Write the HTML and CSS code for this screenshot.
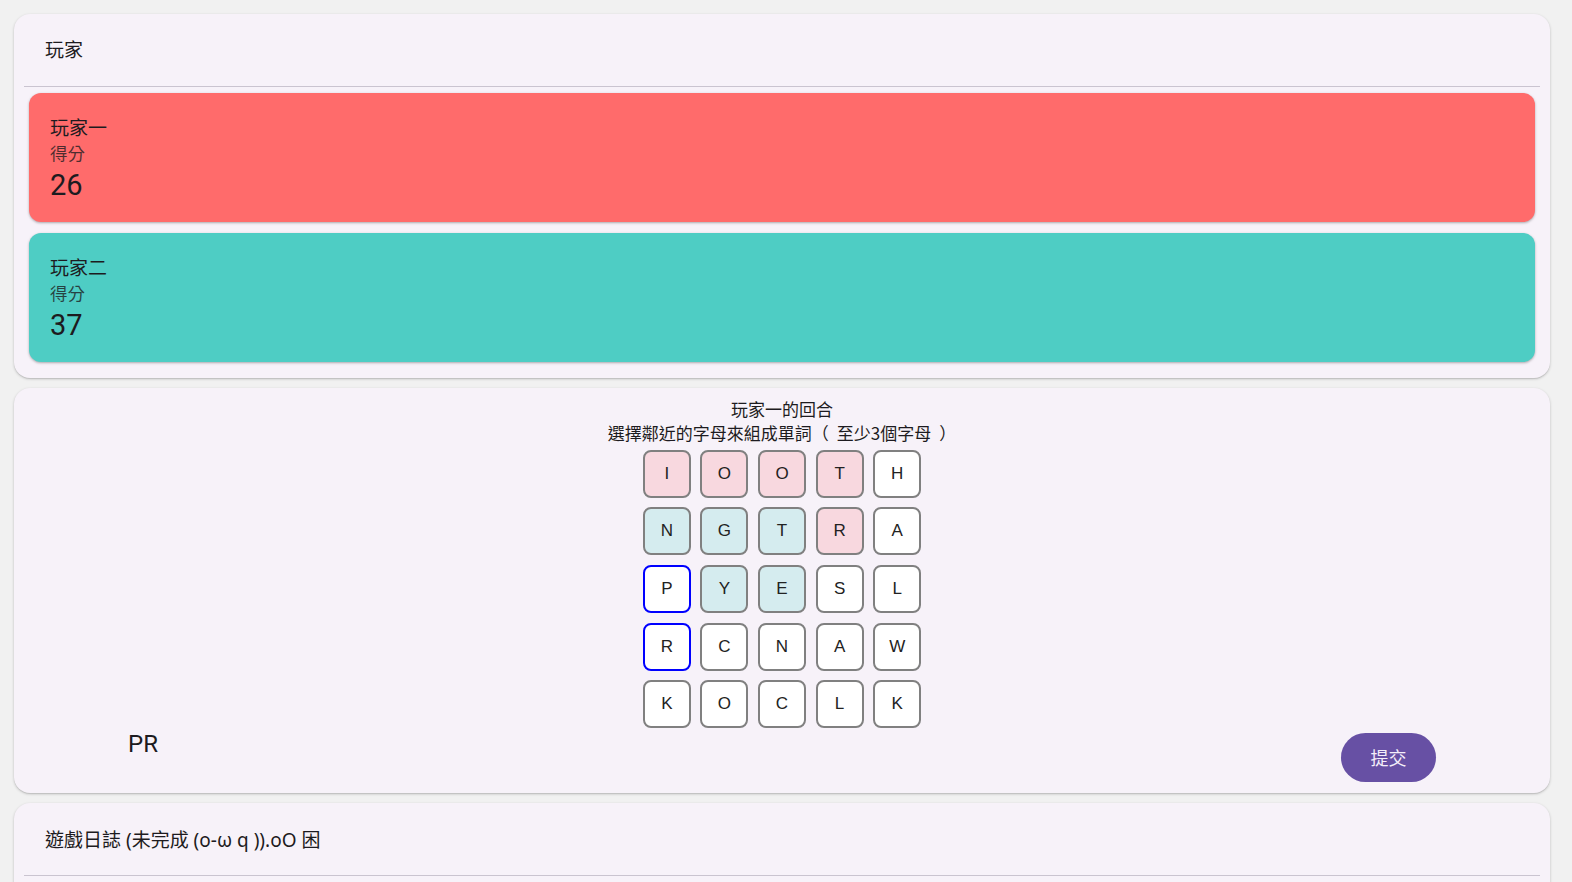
FILE: index.html
```html
<!DOCTYPE html>
<html lang="zh-Hant">
<head>
<meta charset="utf-8">
<title>Word Game</title>
<link rel="stylesheet" href="styles.css">
</head>
<body>
<main class="page">
  <section class="card card-players">
    <div class="card-header">玩家</div>
    <div class="divider"></div>
    <div class="players">
      <div class="player player-red">
        <div class="player-name">玩家一</div>
        <div class="player-label">得分</div>
        <div class="player-score">26</div>
      </div>
      <div class="player player-teal">
        <div class="player-name">玩家二</div>
        <div class="player-label">得分</div>
        <div class="player-score">37</div>
      </div>
    </div>
  </section>

  <section class="card card-game">
    <div class="turn">玩家一的回合</div>
    <div class="hint">選擇鄰近的字母來組成單詞<span class="paren-open">（</span>至少3個字母<span class="paren-close">）</span></div>
    <div class="board">
      <div class="tile t-red">I</div>
      <div class="tile t-red">O</div>
      <div class="tile t-red">O</div>
      <div class="tile t-red">T</div>
      <div class="tile">H</div>
      <div class="tile t-teal">N</div>
      <div class="tile t-teal">G</div>
      <div class="tile t-teal">T</div>
      <div class="tile t-red">R</div>
      <div class="tile">A</div>
      <div class="tile t-sel">P</div>
      <div class="tile t-teal">Y</div>
      <div class="tile t-teal">E</div>
      <div class="tile">S</div>
      <div class="tile">L</div>
      <div class="tile t-sel">R</div>
      <div class="tile">C</div>
      <div class="tile">N</div>
      <div class="tile">A</div>
      <div class="tile">W</div>
      <div class="tile">K</div>
      <div class="tile">O</div>
      <div class="tile">C</div>
      <div class="tile">L</div>
      <div class="tile">K</div>
    </div>
    <div class="word-row">
      <div class="current-word">PR</div>
      <button class="submit" type="button">提交</button>
    </div>
  </section>

  <section class="card card-log">
    <div class="card-header">遊戲日誌 (未完成 (o-ω q )).oO 困</div>
    <div class="divider"></div>
    <div class="log"></div>
  </section>
</main>
</body>
</html>
```

FILE: styles.css
```css
html, body {
  margin: 0;
  padding: 0;
  background: #f1f1f1;
  overflow: hidden;
}

body {
  font-family: Roboto, "Liberation Sans", "Noto Sans CJK TC", sans-serif;
  color: #1d1b20;
}

.page {
  display: flex;
  flex-direction: column;
  gap: 10px;
  padding: 14px 22px 0 14px;
}

.card {
  background: #f7f2f9;
  border-radius: 16px;
  box-shadow: 0 1px 3px rgba(0, 0, 0, 0.2), 0 1px 1px rgba(0, 0, 0, 0.08);
  padding: 0 10px;
}

.card-header {
  padding: 24px 21px;
  font-size: 19px;
  line-height: 24px;
  font-family: "Noto Sans", "Noto Sans CJK TC", sans-serif;
  color: #1d1b20;
}

.card-log .card-header {
  padding-top: 25px;
  padding-bottom: 23px;
}

.divider {
  height: 1px;
  background: #cac4d0;
}

.players {
  display: flex;
  flex-direction: column;
  gap: 11px;
  padding: 6px 5px 16px;
}

.player {
  border-radius: 12px;
  padding: 20px 21px 18px;
  box-shadow: 0 1px 3px rgba(0, 0, 0, 0.22), 0 1px 2px rgba(0, 0, 0, 0.1);
}

.player-red { background: #ff6b6b; }
.player-teal { background: #4ecdc4; }

.player-name {
  font-size: 19px;
  line-height: 27px;
  font-family: "Noto Sans CJK TC", sans-serif;
  color: #1d1b20;
}

.player-label {
  font-size: 17.5px;
  line-height: 26px;
  font-family: "Noto Sans CJK TC", sans-serif;
  color: rgba(29, 27, 32, 0.78);
}

.player-score {
  font-size: 29px;
  line-height: 38px;
  font-family: Roboto, "Liberation Sans", sans-serif;
  color: #1d1b20;
}

.card-game {
  padding: 9px 10px 11px;
}

.turn, .hint {
  text-align: center;
  font-size: 17px;
  line-height: 24px;
  font-family: "Noto Sans CJK TC", sans-serif;
  color: #1d1b20;
}

.paren-open {
  margin: 0 8px 0 0;
}

.paren-close {
  margin: 0 0 0 8px;
}

.board {
  display: grid;
  grid-template-columns: repeat(5, 48px);
  grid-auto-rows: 48px;
  gap: 9.6px;
  padding: 4.8px;
  width: max-content;
  margin: 0 auto;
}

.tile {
  box-sizing: border-box;
  border: 2px solid #808080;
  border-radius: 8px;
  background: #ffffff;
  display: flex;
  align-items: center;
  justify-content: center;
  font-family: "Liberation Sans", Arial, sans-serif;
  font-size: 17px;
  color: #222;
}

.t-red { background: #f8d8df; }
.t-teal { background: #d5ecef; }
.t-sel { border-color: #0000ff; }

.word-row {
  display: flex;
  justify-content: space-between;
  align-items: flex-start;
  padding: 0 104px;
}

.current-word {
  font-family: Roboto, "Liberation Sans", sans-serif;
  font-size: 24px;
  line-height: 20px;
  margin-top: 1px;
  color: #1d1b20;
}

.submit {
  width: 95px;
  height: 49px;
  border: none;
  border-radius: 25px;
  background: #6750a4;
  color: #f4eefa;
  font-family: "Noto Sans CJK TC", sans-serif;
  font-size: 18px;
  padding: 0;
}

.log {
  height: 40px;
}
```
